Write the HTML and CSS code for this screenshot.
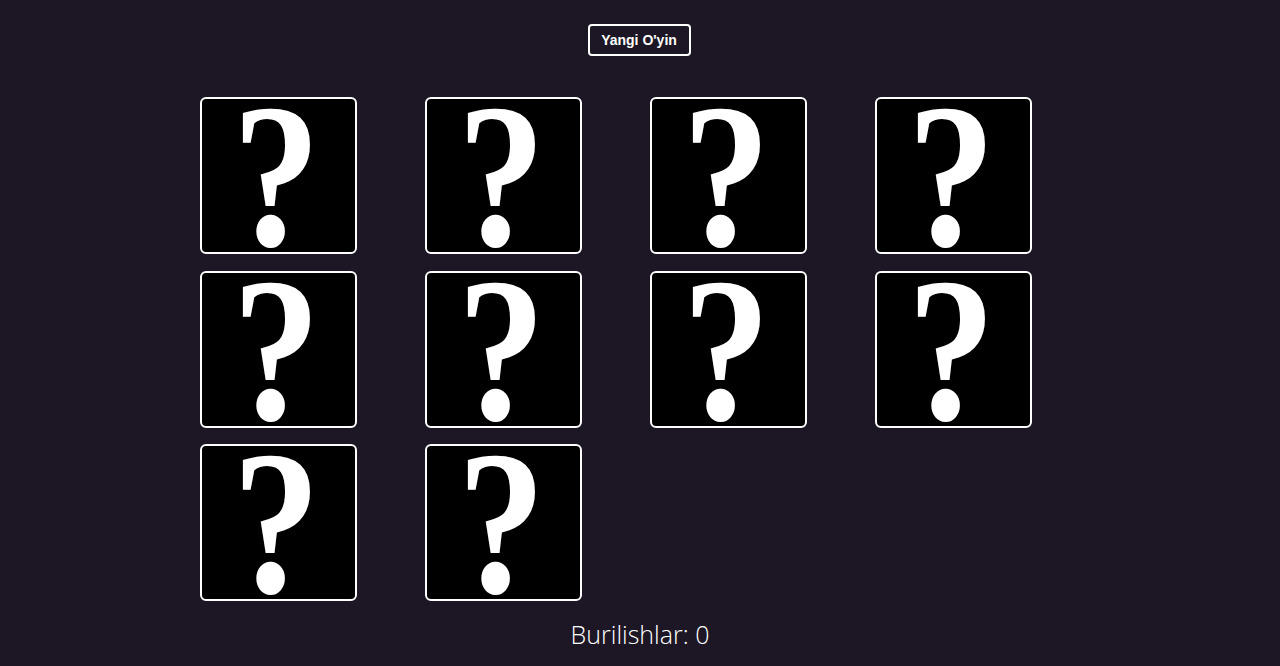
FILE: index.html
```html
<!DOCTYPE html>
<html lang="uz">
<head>
<meta charset="utf-8">
<title>Xotira o'yini</title>
<link rel="stylesheet" href="styles.css">
</head>
<body>
<main class="game">
  <div class="toolbar">
    <button class="new-game" type="button">Yangi O'yin</button>
  </div>
  <div class="board">
    <div class="card"><span class="mark">?</span></div>
    <div class="card"><span class="mark">?</span></div>
    <div class="card"><span class="mark">?</span></div>
    <div class="card"><span class="mark">?</span></div>
    <div class="card"><span class="mark">?</span></div>
    <div class="card"><span class="mark">?</span></div>
    <div class="card"><span class="mark">?</span></div>
    <div class="card"><span class="mark">?</span></div>
    <div class="card"><span class="mark">?</span></div>
    <div class="card"><span class="mark">?</span></div>
  </div>
  <p class="moves">Burilishlar: 0</p>
</main>
</body>
</html>
```

FILE: styles.css
```css
html, body {
  margin: 0;
  padding: 0;
  background: #1d1725;
  height: 100%;
}

body {
  font-family: "Liberation Sans", Arial, sans-serif;
  color: #ffffff;
  overflow: hidden;
}

.game {
  display: flex;
  flex-direction: column;
  align-items: center;
  padding-top: 24px;
}

.toolbar {
  display: flex;
  justify-content: center;
  padding-right: 2px;
}

.new-game {
  width: 103px;
  height: 32px;
  background: #1d1725;
  color: #ffffff;
  border: 2px solid #ffffff;
  border-radius: 4px;
  font-family: "Liberation Sans", Arial, sans-serif;
  font-weight: bold;
  font-size: 14px;
  padding: 0;
  cursor: pointer;
}

.board {
  margin-top: 41px;
  width: 880px;
  display: grid;
  grid-template-columns: repeat(4, 157px);
  column-gap: 68px;
  row-gap: 16.5px;
}

.card {
  box-sizing: border-box;
  width: 157px;
  height: 157px;
  background: #000000;
  border: 2px solid #ffffff;
  border-radius: 6px;
  display: flex;
  justify-content: center;
  align-items: flex-start;
  overflow: hidden;
}

.mark {
  display: block;
  font-family: "Liberation Serif", "Times New Roman", serif;
  font-weight: bold;
  font-size: 205px;
  line-height: 150px;
  height: 150px;
  color: #ffffff;
  margin-top: 2px;
  margin-right: 5px;
  transform: scaleX(0.86);
}

.moves {
  margin: 17px 0 0;
  font-family: "Open Sans", "Lato", sans-serif;
  font-weight: 300;
  font-size: 25px;
  line-height: 32px;
  color: #ffffff;
}
```
